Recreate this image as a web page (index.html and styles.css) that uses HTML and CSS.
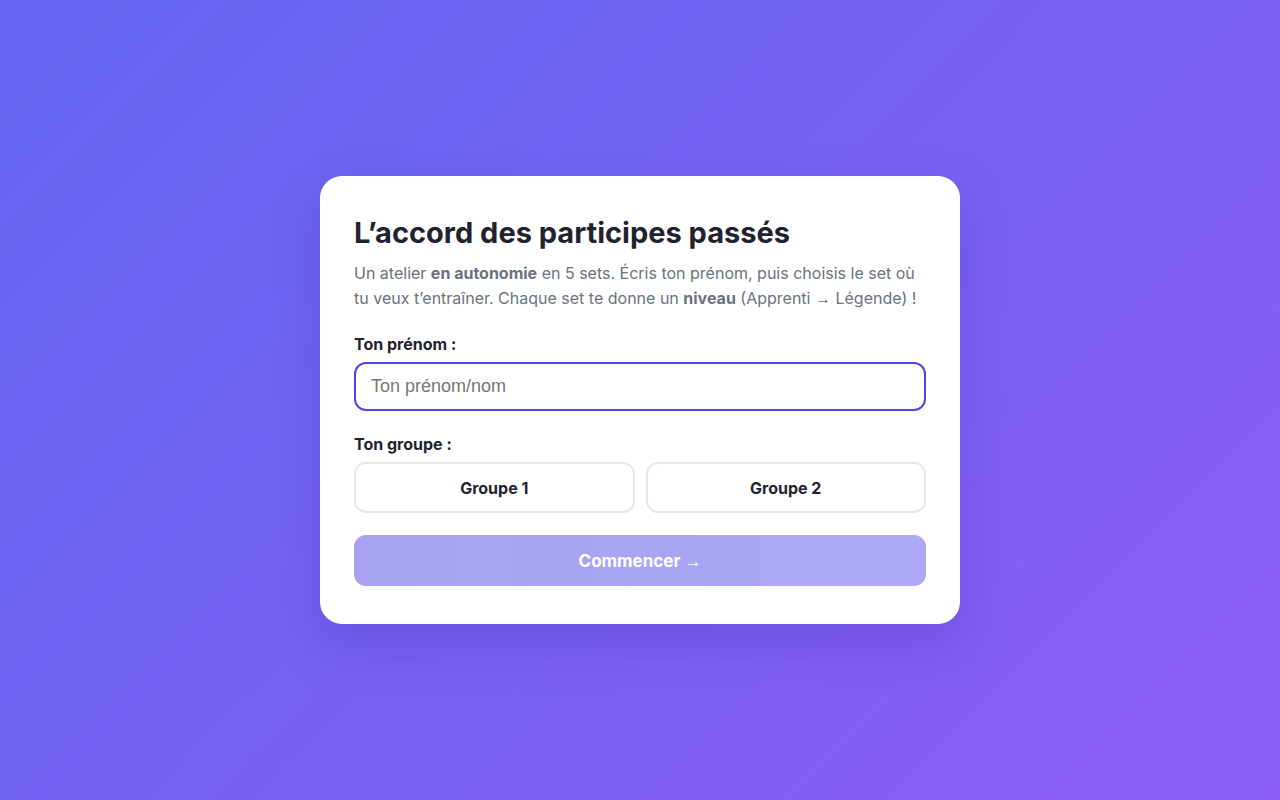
FILE: index.html
```html
<!DOCTYPE html>
<html lang="fr">
<head>
<meta charset="utf-8">
<title>L’accord des participes passés</title>
<link rel="stylesheet" href="styles.css">
</head>
<body>
<main class="page">
  <section class="card">
    <h1 class="title">L’accord des participes passés</h1>
    <p class="intro">Un atelier <strong>en autonomie</strong> en 5 sets. Écris ton prénom, puis choisis le set où tu veux t’entraîner. Chaque set te donne un <strong>niveau</strong> (Apprenti <span class="arrow">→</span> Légende) !</p>
    <label class="label" for="name">Ton prénom :</label>
    <input class="input" id="name" type="text" placeholder="Ton prénom/nom">
    <div class="label">Ton groupe :</div>
    <div class="groups">
      <button class="group-btn" type="button">Groupe 1</button>
      <button class="group-btn" type="button">Groupe 2</button>
    </div>
    <button class="start" type="button" disabled>Commencer <span class="arrow">→</span></button>
  </section>
</main>
</body>
</html>
```
FILE: styles.css
```css
* { box-sizing: border-box; }
html, body { margin: 0; height: 100%; }
body {
  background: linear-gradient(135deg, #6366f1 0%, #8b5cf6 100%);
  font-family: "Inter", "Noto Sans", sans-serif;
}
.page {
  min-height: 100vh;
  display: flex;
  align-items: center;
  justify-content: center;
}
.card {
  width: 640px;
  background: #ffffff;
  border-radius: 22px;
  padding: 37px 34px 38px;
  box-shadow: 0 20px 50px rgba(60, 40, 160, 0.25);
  display: flex;
  flex-direction: column;
}
.title {
  margin: 0 0 8px;
  font-family: "Inter", sans-serif;
  font-weight: 700;
  font-size: 29px;
  line-height: 40px;
  color: #1f2330;
  letter-spacing: 0;
}
.intro {
  margin: 0 0 23px;
  font-size: 16px;
  line-height: 25px;
  color: #6b7280;
}
.intro strong { font-weight: 700; color: #6b7280; }
.arrow {
  font-family: "Liberation Sans", Arial, sans-serif;
  font-weight: 400;
  font-size: 1em;
  line-height: 1;
}
.label {
  font-size: 16px;
  line-height: 20px;
  font-weight: 700;
  color: #1f2330;
  margin-bottom: 8px;
}
.input {
  height: 49px;
  width: 100%;
  border: 2px solid #4f46e5;
  border-radius: 12px;
  padding: 0 15px;
  font-family: "Liberation Sans", Arial, sans-serif;
  font-size: 18px;
  color: #1f2330;
  outline: none;
  margin-bottom: 23px;
}
.input::placeholder { color: #767676; }
.groups {
  display: grid;
  grid-template-columns: 1fr 1fr;
  gap: 11px;
  margin-bottom: 22px;
}
.group-btn {
  height: 51px;
  background: #ffffff;
  border: 2px solid #e5e7eb;
  border-radius: 12px;
  font-family: "Inter", sans-serif;
  font-weight: 700;
  font-size: 16px;
  color: #1f2330;
}
.start {
  height: 51px;
  border: none;
  border-radius: 12px;
  background: linear-gradient(90deg, #4f46e5, #5b52ec);
  opacity: 0.5;
  color: #ffffff;
  font-family: "Inter", sans-serif;
  font-weight: 700;
  font-size: 17px;
}
```
